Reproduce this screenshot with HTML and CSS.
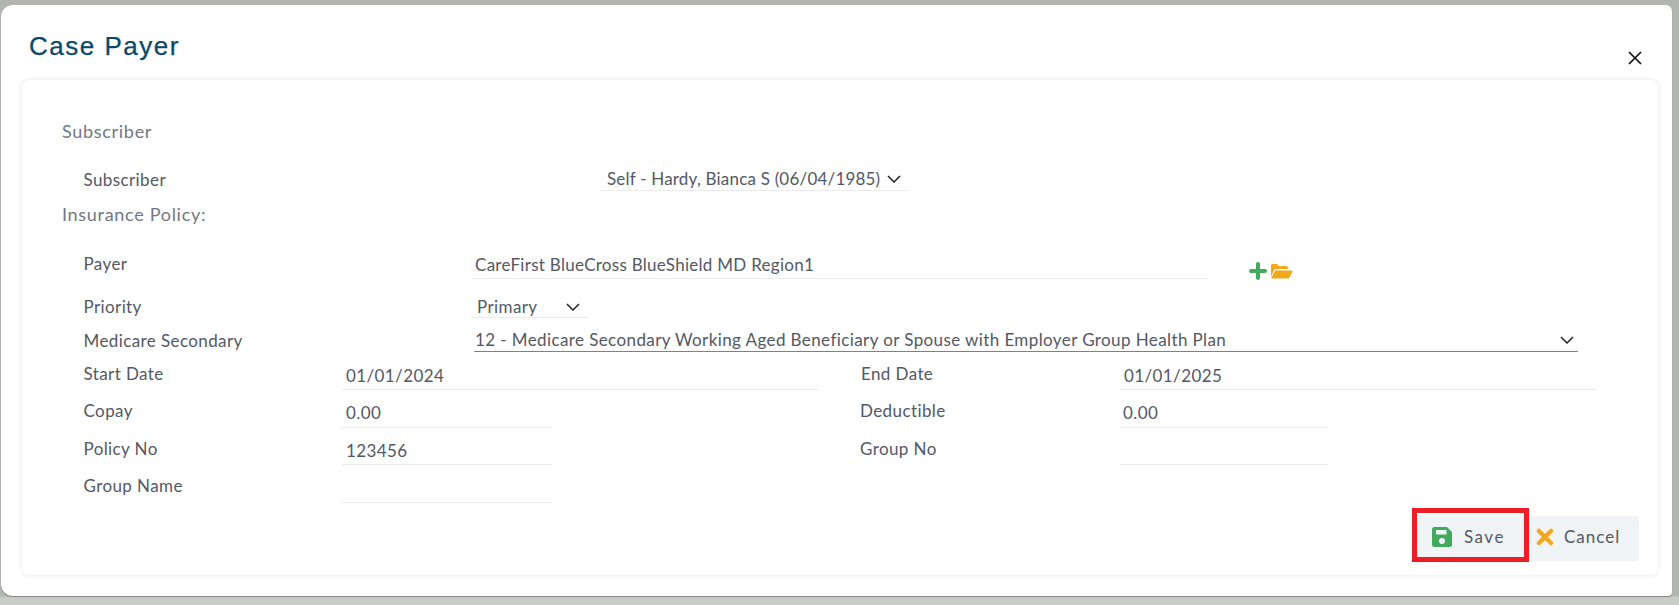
FILE: index.html
```html
<!DOCTYPE html>
<html lang="en">
<head>
<meta charset="utf-8">
<title>Case Payer</title>
<link rel="stylesheet" href="styles.css">
</head>
<body>
<div class="modal">
  <header class="modal-head">
    <h1 class="title">Case Payer</h1>
    <svg class="close" viewBox="0 0 14 14" width="14" height="14"><path d="M1 1L13 13M13 1L1 13" stroke="#111" stroke-width="1.7" fill="none"/></svg>
  </header>
  <main class="card">
    <h2 class="section first">Subscriber</h2>
    <div class="row r-sub">
      <label class="lab lab-wide">Subscriber</label>
      <div class="ctl sel w-sub">Self - Hardy, Bianca S (06/04/1985)<svg class="chev" viewBox="0 0 14 8" width="14" height="8"><path d="M1 1L7 7L13 1" stroke="#222" stroke-width="1.5" fill="none"/></svg></div>
    </div>
    <h2 class="section second">Insurance Policy:</h2>
    <div class="row r-payer">
      <label class="lab lab-mid">Payer</label>
      <div class="ctl inp w-payer">CareFirst BlueCross BlueShield MD Region1</div>
      <div class="icons">
        <svg viewBox="0 0 18 18" width="18" height="18"><path d="M9 2V16M2 9H16" stroke="#43a95c" stroke-width="4" stroke-linecap="round" fill="none"/></svg>
        <svg viewBox="0 0 23 16" width="23" height="16"><path d="M1 14V2.500Q1 1 2.500 1H7L9 3H16Q18 3 18 5V6H6Q4.500 6 3.800 7.500Z" fill="#f2a81d"/><path d="M5 7.500H21.500Q23 7.500 22.300 9L19.500 14.500Q19 15.500 18 15.500H2Q1 15.500 1.500 14.500Z" fill="#f2a81d"/></svg>
      </div>
    </div>
    <div class="row r-pri">
      <label class="lab lab-mid">Priority</label>
      <div class="ctl sel w-pri">Primary<svg class="chev" viewBox="0 0 14 8" width="14" height="8"><path d="M1 1L7 7L13 1" stroke="#222" stroke-width="1.5" fill="none"/></svg></div>
    </div>
    <div class="row r-med">
      <label class="lab lab-mid">Medicare Secondary</label>
      <div class="ctl sel active w-med">12 - Medicare Secondary Working Aged Beneficiary or Spouse with Employer Group Health Plan<svg class="chev" viewBox="0 0 14 8" width="14" height="8"><path d="M1 1L7 7L13 1" stroke="#222" stroke-width="1.5" fill="none"/></svg></div>
    </div>
    <div class="row r-date">
      <label class="lab lab-nar">Start Date</label>
      <div class="ctl inp w-date">01/01/2024</div>
      <label class="lab lab-right">End Date</label>
      <div class="ctl inp w-date">01/01/2025</div>
    </div>
    <div class="row r-std">
      <label class="lab lab-nar">Copay</label>
      <div class="ctl inp w-short">0.00</div>
      <label class="lab lab-right gap-short">Deductible</label>
      <div class="ctl inp w-short">0.00</div>
    </div>
    <div class="row r-std">
      <label class="lab lab-nar">Policy No</label>
      <div class="ctl inp w-short">123456</div>
      <label class="lab lab-right gap-short">Group No</label>
      <div class="ctl inp w-short"></div>
    </div>
    <div class="row r-std">
      <label class="lab lab-nar">Group Name</label>
      <div class="ctl inp w-short"></div>
    </div>
    <footer class="actions">
      <button class="btn btn-save" type="button">
        <svg viewBox="0 0 20 20" width="20" height="20"><path fill-rule="evenodd" d="M2.500 0H15L20 5V17.500A2.500 2.500 0 0 1 17.500 20H2.500A2.500 2.500 0 0 1 0 17.500V2.500A2.500 2.500 0 0 1 2.500 0ZM4 3V7.500H14.500V3ZM10 11A3 3 0 1 0 10 17A3 3 0 1 0 10 11Z" fill="#43a95c"/></svg>
        Save
      </button>
      <button class="btn btn-cancel" type="button">
        <svg viewBox="0 0 18 18" width="18" height="18"><path d="M3 3L15 15M15 3L3 15" stroke="#f2a81d" stroke-width="4.500" stroke-linecap="round" fill="none"/></svg>
        Cancel
      </button>
      <span class="highlight"></span>
    </footer>
  </main>
</div>
</body>
</html>
```
FILE: styles.css
```css
* { box-sizing: border-box; }
html, body { margin: 0; height: 605px; overflow: hidden; }
body {
  background: linear-gradient(#b3b5b3 0, #b3b5b3 596px, #c9cbc9 597px);
  padding: 5px 7px 0 1px;
  font-family: "Lato", "Noto Sans", sans-serif;
  font-size: 17px;
  letter-spacing: .4px;
  color: #535865;
}
.modal {
  height: 591px;
  background: #fff;
  border-radius: 12px 6px 4px 12px;
  padding: 0 14px 0 21px;
  box-shadow: 0 1px 1px rgba(0,0,0,.3);
}
.modal-head {
  height: 75px;
  display: flex;
  justify-content: space-between;
  align-items: flex-start;
  padding: 26px 16px 0 7px;
}
.title {
  margin: 0;
  font: 400 26px/30px "Liberation Sans", sans-serif;
  letter-spacing: 1.5px;
  color: #0a4868;
  -webkit-text-stroke: .25px #0a4868;
}
.close { margin: 20px 0 0; }
.card {
  position: relative;
  height: 495px;
  background: #fff;
  border-radius: 8px;
  padding: 39px 0 0 40px;
  box-shadow: 0 0 6px rgba(0,0,0,.1);
}
.section {
  margin: 0;
  font-size: 18px;
  font-weight: 400;
  line-height: 24px;
  letter-spacing: .7px;
  color: #717884;
}
.second { margin-top: 11px; }
.row { display: flex; padding-left: 21.500px; align-items: flex-start; }
.r-sub { margin-top: 24px; height: 24px; }
.r-payer { margin-top: 29px; height: 24px; }
.r-pri { margin-top: 16px; height: 23px; }
.r-med { margin-top: 10px; height: 24px; }
.r-date { margin-top: 14px; height: 24px; }
.r-std { margin-top: 13px; height: 24.500px; }
.lab { line-height: 20px; flex: none; }
.lab-wide { width: 516.500px; padding-top: 3px; }
.lab-mid { width: 388.500px; margin-top: -1px; }
.r-pri .lab-mid { padding-top: 2px; margin-top: 0; }
.r-med .lab-mid { padding-top: 3px; margin-top: 0; }
.lab-nar { width: 258.500px; margin-top: -2px; }
.lab-right { width: 259px; margin-left: 42px; margin-top: -2px; }
.gap-short { margin-left: 308px; }
.ctl {
  flex: none;
  height: 100%;
  line-height: 24px;
  padding: 0 4px;
  border-bottom: 1px solid #ececec;
  white-space: nowrap;
}
.inp { line-height: 20px; }
.w-payer { padding-left: 3px; letter-spacing: .28px; }
.sel { display: flex; justify-content: space-between; align-items: center; }
.active { border-bottom-color: #3d93d6; }
.w-sub { width: 308px; padding: 0 7px; letter-spacing: .2px; }
.w-payer { width: 736px; }
.w-pri { width: 116px; padding: 2px 8px 0 5px; }
.w-med { width: 1104px; margin-left: 2px; padding: 1px 4px 0 1px; }
.w-date { width: 477px; }
.w-short { width: 210px; }
.chev { flex: none; }
.icons { display: flex; align-items: center; gap: 3px; margin: 7px 0 0 41px; }
.actions {
  position: absolute;
  right: 19px;
  bottom: 14px;
  display: flex;
  height: 45px;
}
.btn {
  display: flex;
  align-items: center;
  height: 45px;
  border: 0;
  background: #f1f4f6;
  font: 400 17px "Lato", sans-serif;
  letter-spacing: 1.5px;
  color: #535865;
  padding: 0 0 4px;
}
.btn-save { width: 109px; padding-left: 15px; gap: 12px; border-radius: 4px 0 0 4px; }
.btn-cancel { width: 113px; padding-left: 10px; gap: 10px; letter-spacing: 1px; border-radius: 0 4px 4px 0; }
.highlight {
  position: absolute;
  left: -5px;
  top: -8px;
  width: 117px;
  height: 54px;
  border: 5px solid #ee1c25;
}
```
